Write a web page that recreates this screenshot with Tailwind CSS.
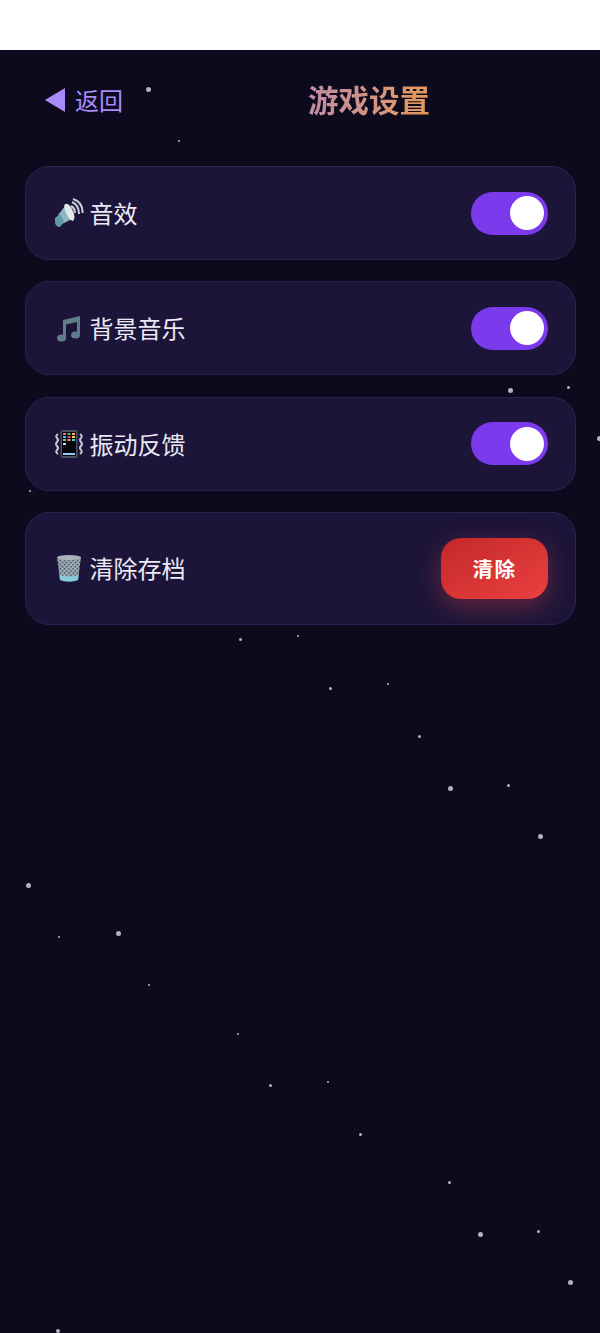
<!DOCTYPE html>
<html lang="zh">
<head>
    <meta charset="UTF-8">
    <meta name="viewport" content="width=device-width, initial-scale=1.0">
    <title>游戏设置</title>
    <script src="https://cdn.jsdelivr.net/npm/@tailwindcss/browser@4"></script>
</head>
<body class="bg-white font-['Noto_Sans_CJK_SC','Noto_Sans',sans-serif]">
    <div class="h-[50px] bg-white"></div>
    <main id="screen" class="relative h-[1283px] overflow-hidden bg-[#0d0a1d] pl-[25px] pr-[24px]">
        <div id="stars" class="absolute inset-0"></div>

        <header class="relative flex items-center h-[116px] pl-[20px] pb-[16px]">
            <a class="flex items-center gap-[10px] text-[24px] leading-none text-[#a78bfa]">
                <svg class="w-[20px] h-[24px]" viewBox="0 0 20 24"><path fill="#a78bfa" d="M0 12 20 0v24z"/></svg>
                <span>返回</span>
            </a>
            <h1 class="absolute left-[283px] top-[29px] text-[30.500px] leading-[40px] font-bold bg-linear-to-r from-[#c08ba6] to-[#e49a55] bg-clip-text text-transparent">游戏设置</h1>
        </header>

        <section class="relative flex flex-col gap-[21.300px]">
            <div class="flex items-center justify-between h-[94px] pl-[28px] pr-[27px] rounded-[24px] bg-[#1c1539] border border-[#2a2350]">
                <div class="flex items-center gap-[5.500px] text-[24px] leading-none text-[#ebe9f5]">
                    <svg class="w-[30px] h-[30px]" viewBox="0 0 30 30">
                        <path fill="#8fb5c0" d="M11 8 18 21 8 26 4 17z"/>
                        <path fill="#5f9aa8" d="M1 20 6 16 10 24 6 29Q2 29 1 25z"/>
                        <path fill="#dfe8ec" d="M11 6Q15 4 19 13 22 20 19 23 15 22 12 15 9 8 11 6z"/>
                        <g fill="none" stroke="#c9ced8" stroke-width="2">
                            <path d="M17 8Q21 10 21 15"/><path d="M18 4Q25 7 25 16"/><path d="M19 1Q29 4 28.500 15"/>
                        </g>
                    </svg>
                    <span>音效</span>
                </div>
                <div class="relative w-[77px] h-[43px] rounded-full bg-[#7c3aed]">
                    <div class="absolute right-[4.500px] top-[4.500px] w-[34px] h-[34px] rounded-full bg-white"></div>
                </div>
            </div>

            <div class="flex items-center justify-between h-[94px] pl-[28px] pr-[27px] rounded-[24px] bg-[#1c1539] border border-[#2a2350]">
                <div class="flex items-center gap-[5.500px] text-[24px] leading-none text-[#ebe9f5]">
                    <svg class="w-[30px] h-[30px]" viewBox="0 0 30 30">
                        <path fill="#607d8b" d="M9 7 26 3V22H23V9L12 11.500V25H9z"/>
                        <ellipse cx="7.500" cy="25" rx="4.500" ry="3.500" fill="#607d8b"/>
                        <ellipse cx="21.500" cy="22" rx="4.500" ry="3.500" fill="#607d8b"/>
                    </svg>
                    <span>背景音乐</span>
                </div>
                <div class="relative w-[77px] h-[43px] rounded-full bg-[#7c3aed]">
                    <div class="absolute right-[4.500px] top-[4.500px] w-[34px] h-[34px] rounded-full bg-white"></div>
                </div>
            </div>

            <div class="flex items-center justify-between h-[94px] pl-[28px] pr-[27px] rounded-[24px] bg-[#1c1539] border border-[#2a2350]">
                <div class="flex items-center gap-[5.500px] text-[24px] leading-none text-[#ebe9f5]">
                    <svg class="w-[30px] h-[30px]" viewBox="0 0 30 30">
                        <g fill="none" stroke="#c4c6d2" stroke-width="2">
                            <path d="M4 5Q1 7 3 9T3 13 3 17 3 21 4 25"/><path d="M26 5Q29 7 27 9T27 13 27 17 27 21 26 25"/>
                        </g>
                        <rect x="6.500" y="1" width="17" height="28" rx="2" fill="#4a4f5c"/>
                        <rect x="8" y="3" width="14" height="24" fill="#06060c"/>
                        <rect x="9" y="4" width="3" height="2" fill="#e57373"/><rect x="13.500" y="4" width="3" height="2" fill="#66bb6a"/><rect x="18" y="4" width="3" height="2" fill="#ffb74d"/>
                        <rect x="9" y="7" width="3" height="2" fill="#4fc3f7"/><rect x="13.500" y="7" width="3" height="2" fill="#ef5350"/><rect x="18" y="7" width="3" height="2" fill="#ffd54f"/>
                        <rect x="9" y="10" width="3" height="2" fill="#81c784"/><rect x="13.500" y="10" width="3" height="2" fill="#ff8a65"/><rect x="18" y="10" width="3" height="2" fill="#4dd0e1"/>
                        <rect x="9" y="14" width="3" height="2" fill="#cfd8dc"/>
                        <rect x="9" y="24" width="12" height="2" fill="#90caf9"/>
                    </svg>
                    <span>振动反馈</span>
                </div>
                <div class="relative w-[77px] h-[43px] rounded-full bg-[#7c3aed]">
                    <div class="absolute right-[4.500px] top-[4.500px] w-[34px] h-[34px] rounded-full bg-white"></div>
                </div>
            </div>

            <div class="flex items-center justify-between h-[113px] pl-[28px] pr-[27px] rounded-[24px] bg-[#1c1539] border border-[#2a2350]">
                <div class="flex items-center gap-[5.500px] text-[24px] leading-none text-[#ebe9f5]">
                    <svg class="w-[30px] h-[30px]" viewBox="0 0 30 30">
                        <defs>
                            <pattern id="mesh" width="3" height="3" patternUnits="userSpaceOnUse" patternTransform="rotate(45)">
                                <rect width="3" height="3" fill="#a2afba"/>
                                <rect width="1.500" height="1.500" fill="#39414f"/>
                            </pattern>
                        </defs>
                        <path fill="url(#mesh)" d="M3 4H27L24 27Q15 30 6 27z"/>
                        <ellipse cx="15" cy="4.500" rx="12" ry="2.500" fill="#a8b3bd"/>
                        <path fill="#86cbe0" d="M5.500 22Q15 25 24.500 22L24 27Q15 30 6 27z"/>
                    </svg>
                    <span>清除存档</span>
                </div>
                <button class="w-[107px] h-[61px] rounded-[20px] bg-linear-to-br from-[#c42828] to-[#ea4040] shadow-[0_8px_26px_rgba(239,68,68,0.35)] text-white text-[20.500px] font-bold tracking-[1.500px]">清除</button>
            </div>
        </section>
    </main>

    <script>
        // x, y (page coordinates), size
        const stars = [
            [148,89,5],[179,141,2],[510,390,5],[568,387,3],[599,438,5],[30,491,2],
            [240,639,3],[298,636,2],[330,688,3],[388,684,2],[419,736,3],[450,788,5],
            [508,785,3],[540,836,5],[28,885,5],[59,937,2],[118,933,5],[149,985,2],
            [238,1034,2],[270,1085,3],[328,1082,2],[360,1134,3],[449,1182,3],[480,1234,5],
            [538,1231,3],[570,1282,5],[58,1331,4]
        ];
        const box = document.getElementById('stars');
        stars.forEach(([x, y, size]) => {
            const dot = document.createElement('div');
            dot.className = 'absolute rounded-full bg-[#b4b3bf]';
            dot.style.left = (x - size / 2) + 'px';
            dot.style.top = (y - 50 - size / 2) + 'px';
            dot.style.width = size + 'px';
            dot.style.height = size + 'px';
            box.appendChild(dot);
        });
    </script>
</body>
</html>
